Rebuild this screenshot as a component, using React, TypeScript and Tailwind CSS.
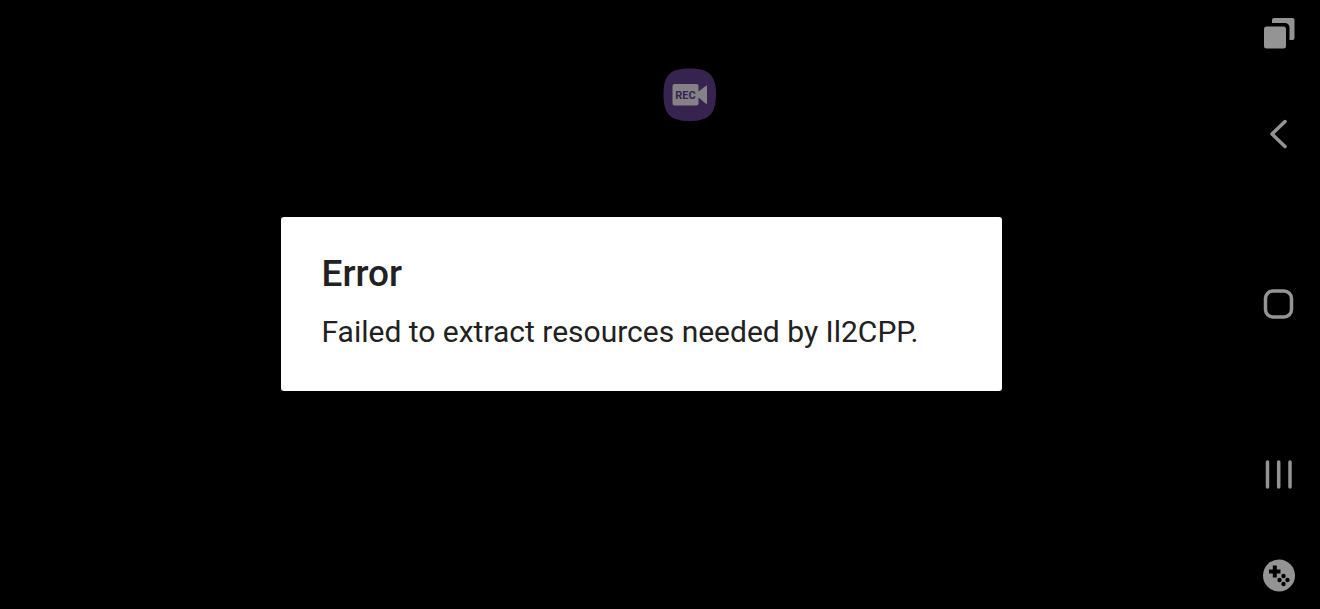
import React from 'react';

interface RailButtonProps {
  label: string;
  children: React.ReactNode;
}

const RailButton: React.FC<RailButtonProps> = ({ label, children }) => (
  <button type="button" aria-label={label} className="flex items-center justify-center w-full h-[66px] text-[#949494]">
    <svg viewBox="0 0 40 40" className="w-10 h-10" fill="none" stroke="currentColor" aria-hidden="true">
      {children}
    </svg>
  </button>
);

const RecorderBadge: React.FC = () => (
  <button type="button" aria-label="Screen recorder" className="absolute top-[68px] left-[663px] w-[53px] h-[53px]">
    <svg viewBox="0 0 53 53" className="w-full h-full" aria-hidden="true">
      <path d="M26.5 0.5C46 0.5 53 7 53 26.5S46 53 26.5 53 0.5 46 0.5 26.5 7 0.5 26.5 0.5Z" fill="#36234f" />
      <path d="M11.5 16H33.500a2 2 0 0 1 2 2v5.500l7.500-5.800c.5-.4 1-.2 1 .5v17c0 .7-.5.9-1 .5L35.500 29.500v6a2 2 0 0 1-2 2H11.500a2 2 0 0 1-2-2V18a2 2 0 0 1 2-2Z" fill="#858187" />
      <text x="22.500" y="31" textAnchor="middle" className="font-['Roboto',sans-serif] text-[11px] font-bold" fill="#36234f">
        REC
      </text>
    </svg>
  </button>
);

const NavigationRail: React.FC = () => (
  <nav aria-label="System navigation" className="flex flex-col w-[82px] shrink-0">
    <RailButton label="Switch window">
      <path d="M13 7a2 2 0 0 1 2-2h18.500a2 2 0 0 1 2 2v18a2 2 0 0 1-2 2H30.500V14.500a4.500 4.500 0 0 0-4.500-4.500H13Z" fill="currentColor" stroke="none" />
      <rect x="5" y="13.500" width="22" height="22" rx="2.500" fill="currentColor" stroke="none" />
    </RailButton>
    <div className="flex flex-col flex-1 justify-between py-[35px]">
      <RailButton label="Back">
        <path d="M26 7.500 13 20l13 12.500" strokeWidth="3.500" strokeLinecap="round" strokeLinejoin="round" />
      </RailButton>
      <RailButton label="Home">
        <rect x="6.500" y="6" width="26" height="26" rx="7.500" strokeWidth="3.500" />
      </RailButton>
      <RailButton label="Recent apps">
        <path d="M8.500 7v25M19.700 7v25M31 7v25" strokeWidth="3.500" strokeLinecap="round" />
      </RailButton>
    </div>
    <RailButton label="Game tools">
      <circle cx="20" cy="19.500" r="16" fill="currentColor" stroke="none" />
      <path d="M15.800 9.500v12M10 15.500h11.500" stroke="#000" strokeWidth="4" />
      <g fill="#000" stroke="none">
        <circle cx="24.500" cy="20" r="2.200" />
        <circle cx="20.500" cy="24" r="2.200" />
        <circle cx="28.500" cy="24" r="2.200" />
        <circle cx="24.500" cy="28" r="2.200" />
      </g>
    </RailButton>
  </nav>
);

const App: React.FC = () => {
  return (
    <div className="relative flex min-h-screen bg-black font-['Roboto',sans-serif]">
      <main className="flex flex-1 items-center justify-center pl-11 pb-px">
        <section
          role="alertdialog"
          aria-labelledby="error-title"
          aria-describedby="error-message"
          className="w-full max-w-[721px] px-[41px] pt-9 pb-[38px] bg-white rounded-[3px] text-[#212121]"
        >
          <h1 id="error-title" className="text-[37px] leading-[42px] font-medium">Error</h1>
          <p id="error-message" className="mt-4 text-[30px] leading-[42px]">
            Failed to extract resources needed by Il2CPP.
          </p>
        </section>
      </main>
      <RecorderBadge />
      <NavigationRail />
    </div>
  );
};

export default App;
